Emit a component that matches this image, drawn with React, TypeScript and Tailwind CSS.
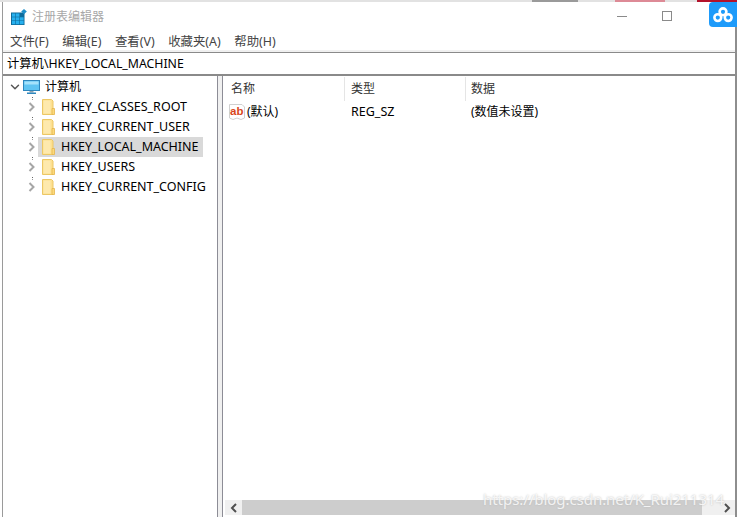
import React from "react";
import { ChevronDown } from "lucide-react";

const font = { fontFamily: '"Noto Sans", "Noto Sans CJK SC", sans-serif' };

function AppIcon() {
  return (
    <svg width="16" height="16" viewBox="0 0 16 16">
      <rect x="0" y="3.5" width="13.5" height="12.5" fill="#0e6c9c" />
      <g fill="#27b0ee">
        <rect x="1" y="4.5" width="3.4" height="3.2" />
        <rect x="5" y="4.5" width="3.4" height="3.2" />
        <rect x="1" y="8.3" width="3.4" height="3.2" />
        <rect x="5" y="8.3" width="3.4" height="3.2" />
        <rect x="9" y="8.3" width="3.6" height="3.2" />
        <rect x="1" y="12" width="3.4" height="3.2" />
        <rect x="5" y="12" width="3.4" height="3.2" />
        <rect x="9" y="12" width="3.6" height="3.2" />
      </g>
      <path d="M13 0 L15.8 2.6 L13 5.2 L10.2 2.6 Z" fill="#1d8fcb" />
    </svg>
  );
}

function ComputerIcon() {
  return (
    <svg width="17" height="16" viewBox="0 0 17 16">
      <rect x="0.5" y="1.5" width="16" height="10" fill="#5fc4f2" stroke="#2d86bd" />
      <rect x="1.5" y="2.5" width="14" height="3" fill="#a5e2fb" />
      <rect x="6.5" y="12" width="4" height="1.5" fill="#8fa3ad" />
      <rect x="4" y="13.5" width="9" height="1.5" fill="#2d86bd" />
    </svg>
  );
}

function FolderIcon() {
  return (
    <svg width="14" height="16" viewBox="0 0 14 16">
      <path d="M0.5 0.5H9.5L11 2V15.5H0.5Z" fill="#fde08f" stroke="#ecc765" />
      <rect x="1.5" y="1.5" width="7" height="13" fill="#fee9ad" />
      <path d="M10 9.5H12.5V15.5H10Z" fill="#fcd97c" stroke="#e4b64d" strokeWidth="0.8" />
    </svg>
  );
}

function ValueIcon() {
  return (
    <svg width="16" height="16" viewBox="0 0 16 16">
      <path d="M0.5 0.5H13L15.5 3V14L12 15.5L8 14L4 15.5L0.5 14Z" fill="#fff" stroke="#d0d0d0" />
      <text x="1" y="10.5" fontSize="11.5" fontWeight="700" fill="#d9471c" fontFamily='"Liberation Sans", sans-serif'>ab</text>
    </svg>
  );
}

function CloudBadge() {
  return (
    <svg width="20" height="16" viewBox="0 0 20 16" fill="none" stroke="#fff" strokeWidth="2.6">
      <circle cx="10" cy="4.8" r="3.4" />
      <circle cx="4.8" cy="10.6" r="3.4" />
      <circle cx="15.2" cy="10.6" r="3.4" />
    </svg>
  );
}

// Expander arrow of a tree row with the dotted connector above it
function TreeGutter() {
  return (
    <svg width="13" height="20" viewBox="0 0 13 20" className="ml-[22px] shrink-0">
      <rect x="7" y="0" width="1" height="1" fill="#666" />
      <rect x="7" y="2" width="1" height="1" fill="#999" />
      <path d="M4.5 6 L8.5 10 L4.5 14" fill="none" stroke="#a6a6a6" strokeWidth="2" />
    </svg>
  );
}

function ScrollArrow({ dir }: { dir: "left" | "right" }) {
  return (
    <svg width="8" height="10" viewBox="0 0 8 10">
      <path d={dir === "left" ? "M6 1 L2 5 L6 9" : "M2 1 L6 5 L2 9"} fill="none" stroke="#505050" strokeWidth="2" />
    </svg>
  );
}

const keys = [
  "HKEY_CLASSES_ROOT",
  "HKEY_CURRENT_USER",
  "HKEY_LOCAL_MACHINE",
  "HKEY_USERS",
  "HKEY_CURRENT_CONFIG",
];

const menus = ["文件(F)", "编辑(E)", "查看(V)", "收藏夹(A)", "帮助(H)"];

function TreeRow({ name }: { name: string }) {
  const selected = name === "HKEY_LOCAL_MACHINE";
  return (
    <div className="flex h-5 items-center">
      <TreeGutter />
      <div className={`flex h-5 items-center pl-[4px] pr-[4px] ${selected ? "bg-[#d9d9d9]" : ""}`}>
        <FolderIcon />
        <span className="ml-[5px] text-[12.5px] text-black">{name}</span>
      </div>
    </div>
  );
}

export default function App() {
  return (
    <div style={font} className="relative flex h-[517px] w-[737px] flex-col overflow-hidden bg-white">
      {/* Sliver of the page behind the window */}
      <div className="flex h-[2px] shrink-0 bg-[#e2e2e2]">
        <div className="w-[532px]" />
        <div className="w-[46px] bg-[#9a9a9a]" />
        <div className="w-[37px]" />
        <div className="w-[50px] bg-[#dd8a96]" />
        <div className="w-[32px]" />
        <div className="flex-1 bg-[#b3122b]" />
      </div>

      <div className="flex min-h-0 flex-1 border-r-[2px] border-[#8e8e8e] pl-[2px]">
        <div className="flex min-w-0 flex-1 flex-col border-l border-[#9a9a9a]">
          <div className="flex h-[28px] shrink-0 items-center pt-[2px] pl-[8px]">
            <AppIcon />
            <span className="ml-[5px] text-[12px] text-[#a8a8a8]">注册表编辑器</span>
            <div className="mr-[63px] ml-auto flex items-center gap-[35px] pb-[2px]">
              <div className="h-px w-[10px] bg-[#8a8a8a]" />
              <div className="h-[10px] w-[10px] border border-[#8a8a8a]" />
            </div>
          </div>

          <div className="flex h-[22px] shrink-0 items-center gap-[13.6px] border-b-2 border-[#f0f0f0] pt-[5px] pl-[7px] text-[12.4px] text-[#444]">
            {menus.map((m) => (
              <span key={m}>{m}</span>
            ))}
          </div>

          <div className="flex h-[24px] shrink-0 items-center border-t border-b-2 border-[#8a8a8a] bg-white pt-[1px] pl-[4px] text-[12.3px] text-black">
            计算机\HKEY_LOCAL_MACHINE
          </div>

          <div className="flex min-h-0 flex-1">
            <div className="w-[215px] shrink-0 border-r border-[#8d8d96] pt-[1px]">
              <div className="flex h-5 items-center">
                <ChevronDown size={14} strokeWidth={2.5} className="ml-[5px] shrink-0 text-[#555]" />
                <div className="ml-[1px]">
                  <ComputerIcon />
                </div>
                <span className="ml-[5px] text-[12px] text-black">计算机</span>
              </div>
              {keys.map((k) => (
                <TreeRow key={k} name={k} />
              ))}
            </div>

            <div className="w-[4px] shrink-0 bg-[#f0f0f0]" />

            <div className="flex min-w-0 flex-1 flex-col border-l border-[#8d8d96]">
              <div className="flex h-[25px] shrink-0 items-center pt-[1px] text-[12px] text-[#333]">
                <div className="flex h-[24px] w-[122px] items-center border-r border-[#e5e5e5] pl-[8px]">名称</div>
                <div className="flex h-[24px] w-[121px] items-center border-r border-[#e5e5e5] pl-[6px]">类型</div>
                <div className="flex h-[24px] items-center pl-[5px]">数据</div>
              </div>
              <div className="flex h-[22px] shrink-0 items-center text-[12.5px] text-black">
                <div className="flex w-[121px] items-center pl-[6px]">
                  <ValueIcon />
                  <span className="ml-[2px] text-[12px]">(默认)</span>
                </div>
                <div className="w-[121px] pl-[7px]">REG_SZ</div>
                <div className="pl-[6px] text-[12px]">(数值未设置)</div>
              </div>
              <div className="flex-1" />
              <div className="ml-[2px] flex h-[15px] shrink-0 items-center bg-[#f0f0f0]">
                <div className="flex h-full w-[17px] items-center justify-center">
                  <ScrollArrow dir="left" />
                </div>
                <div className="h-full flex-1 bg-[#cdcdcd]" />
                <div className="flex h-full w-[33px] items-center justify-end pr-[4px]">
                  <ScrollArrow dir="right" />
                </div>
              </div>
              <div className="h-[2px] shrink-0 bg-white" />
            </div>
          </div>
        </div>
      </div>

      {/* Floating cloud-drive badge pinned over the title bar */}
      <div className="absolute right-0 top-[2px] flex h-[25px] w-[28px] items-center justify-center rounded-l-[4px] bg-[#1e9bfa]">
        <CloudBadge />
      </div>

      {/* Image-host watermark */}
      <div className="absolute left-[483px] top-[488px] text-[15px] tracking-[-0.05px] text-white/80 [text-shadow:0_0_2px_#b5b5b5]">
        https://blog.csdn.net/K_Rui211314
      </div>
    </div>
  );
}
